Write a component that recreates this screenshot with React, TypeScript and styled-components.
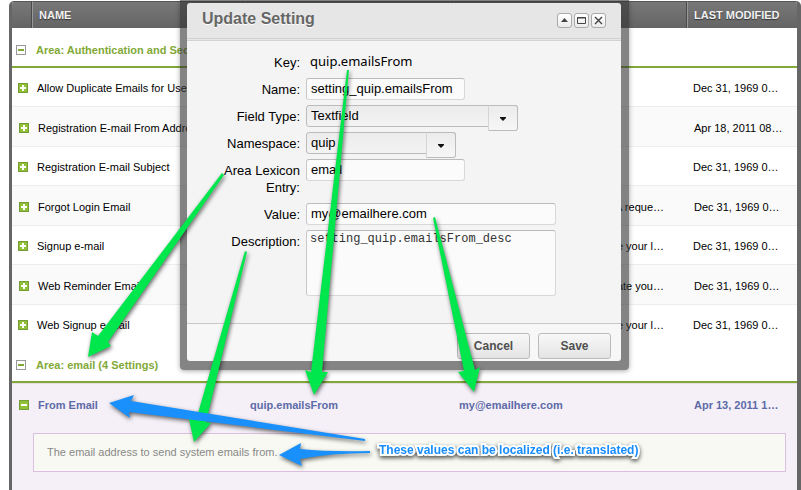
import React from "react";
import styled, { createGlobalStyle, css } from "styled-components";

const GlobalStyle = createGlobalStyle`
  * { box-sizing: border-box; }
  body {
    margin: 0;
    background: #fff;
    color: #000;
    font-family: "Liberation Sans", Arial, sans-serif;
    font-size: 11px;
  }
`;

const Page = styled.main`
  position: relative;
  height: 100vh;
  overflow: hidden;
  padding: 1px 0 0 9px;
`;

const GridPanel = styled.section`
  min-height: 100%;
  border: solid #666;
  border-width: 0 4px 0 3px;
  border-radius: 5px 5px 0 0;
  background: #f5f0f7;
  overflow: hidden;
`;

const GridTable = styled.table`
  width: 100%;
  table-layout: fixed;
  border-collapse: separate;
  border-spacing: 0;
`;

const Head = styled.th`
  height: 27px;
  padding: 0 6px;
  border-top: 1px solid #555;
  border-left: 1px solid #989898;
  border-right: 1px solid #4a4a4a;
  background: linear-gradient(#787878, #646464);
  color: #f2f2f2;
  font-size: 11px;
  text-align: left;
  text-shadow: 0 1px 1px #333;
  &:first-child { border-left: 0; }
  &:last-child { border-right: 0; }
`;

const GroupCell = styled.td`
  height: 40px;
  padding: 6px 4px 0;
  background: #fff;
  border-bottom: 2px solid #82a937;
  color: #82a937;
  font-weight: bold;
`;

const GroupTitle = styled.div`
  display: flex;
  align-items: center;
  gap: 10px;
`;

const Row = styled.tr<{ $alt?: boolean }>`
  td {
    height: 38px;
    padding: 2px 0 0 5px;
    background: #fff;
    white-space: nowrap;
  }
  ${(p) => p.$alt && css`
    td {
      height: 41px;
      padding: 2px 0 0 6px;
      background: #fafafa;
      border: solid #ededed;
      border-width: 1px 0;
    }
  `}
  td:first-child { padding-left: ${(p) => (p.$alt ? 7 : 6)}px; }
  td:last-child { padding-left: ${(p) => (p.$alt ? 7 : 6)}px; }
  td:nth-child(4) { text-align: right; padding-right: 23px; }
`;

const SelectedRow = styled.tr`
  td {
    height: 45px;
    padding: 0 6px 2px;
    border-top: 1px solid #e4dde8;
    color: #5d6ba8;
    font-weight: bold;
    white-space: nowrap;
  }
  td:first-child { padding-left: 7px; }
  td:last-child { padding-left: 7px; }
`;

const DetailCell = styled.td`
  padding: 5px 11px 20px 21px;
`;

const Detail = styled.p`
  margin: 0;
  padding: 12px 13px;
  line-height: 13px;
  background: #f8f9f2;
  border: 1px solid #dcbfe0;
  color: #888;
`;

const Toggle = styled.button`
  display: block;
  width: 10px;
  height: 10px;
  padding: 0;
  border: 0;
  background: none;
  svg { display: block; }
`;

const Dialog = styled.section`
  position: absolute;
  top: 0;
  left: 180px;
  width: 449px;
  padding: 3px 8px 9px 7px;
  border-radius: 0 0 4px 4px;
  background: rgba(50, 50, 50, 0.6);
  box-shadow: 0 1px 5px rgba(0, 0, 0, 0.35);
`;

const TitleBar = styled.header`
  display: flex;
  align-items: center;
  justify-content: space-between;
  height: 38px;
  padding: 0 15px 4px;
  border-radius: 3px 3px 0 0;
  border-bottom: 3px double #d2d2d2;
  background: #e6e6e6;
`;

const Title = styled.h2`
  margin: 0;
  color: #666;
  font-size: 16px;
  line-height: 20px;
  text-shadow: 0 1px 0 #fff;
`;

const Tools = styled.div`
  display: flex;
  gap: 2px;
  padding-top: 3px;
`;

const Tool = styled.button`
  width: 15px;
  height: 15px;
  padding: 0;
  border: 1px solid #aaa;
  border-radius: 3px;
  background: linear-gradient(#fff, #ececec);
  svg { display: block; }
`;

const Form = styled.form`
  margin: 0;
`;

const Fields = styled.div`
  display: grid;
  grid-template-columns: 113px 1fr;
  column-gap: 6px;
  row-gap: 5px;
  padding: 10px 0 27px;
  background: #f4f4f4;
`;

const Label = styled.label`
  padding: 3px 0 2px 30px;
  font-size: 13px;
  line-height: 17px;
  text-align: right;
`;

const KeyValue = styled.output`
  padding: 1px 4px;
  height: 22px;
  font: 13px/18px "Noto Sans", "Open Sans", sans-serif;
`;

const field = css`
  display: block;
  border: 1px solid #d8d8d8;
  border-top-color: #bbb;
  border-left-color: #c8c8c8;
  border-radius: 3px;
  background: #fbfbfb;
  color: #000;
`;

const TextInput = styled.input<{ $wide?: boolean }>`
  ${field}
  width: ${(p) => (p.$wide ? 250 : 159)}px;
  height: 22px;
  padding: 0 4px 1px;
  font: 13px "Liberation Sans", Arial, sans-serif;
`;

const TextArea = styled.textarea`
  ${field}
  width: 250px;
  height: 66px;
  padding: 1px 3px;
  resize: none;
  color: #333;
  font: 12px/15px "Liberation Mono", "Courier New", monospace;
`;

const Combo = styled.div<{ $wide?: boolean }>`
  position: relative;
  width: ${(p) => (p.$wide ? 212 : 150)}px;
  height: 22px;
`;

const Select = styled.select`
  ${field}
  appearance: none;
  width: 100%;
  height: 22px;
  padding: 0 4px 1px;
  border-color: #bbb;
  background: linear-gradient(#ececec, #f3f3f3);
  font: 13px "Liberation Sans", Arial, sans-serif;
`;

const Trigger = styled.span`
  position: absolute;
  top: 0;
  right: 0;
  display: flex;
  align-items: center;
  justify-content: center;
  width: 30px;
  height: 26px;
  padding-top: 2px;
  border: 1px solid #bbb;
  border-left-color: #d5d5d5;
  border-radius: 0 3px 3px 0;
  background: linear-gradient(#ececec, #f6f6f6);
  pointer-events: none;
`;

const Footer = styled.footer`
  display: flex;
  justify-content: flex-end;
  gap: 8px;
  padding: 9px 10px 2px;
  border-top: 1px solid #c8c8c8;
  border-radius: 0 0 3px 3px;
  background: #f7f7f7;
`;

const ActionButton = styled.button`
  width: 73px;
  height: 26px;
  border: 1px solid #bbb;
  border-radius: 3px;
  background: linear-gradient(#f8f8f8, #e4e4e4);
  color: #505050;
  font: bold 12px "Liberation Sans", Arial, sans-serif;
`;

const Arrows = styled.svg`
  position: absolute;
  top: 0;
  left: 0;
  pointer-events: none;
  filter: drop-shadow(1px 2px 2px rgba(0, 0, 0, 0.6));
`;

const Note = styled.p`
  position: absolute;
  top: 442px;
  left: 379px;
  margin: 0;
  color: #168cff;
  font-size: 12px;
  line-height: 16px;
  font-weight: bold;
  white-space: nowrap;
  -webkit-text-stroke: 4px #fff;
  paint-order: stroke fill;
  filter: drop-shadow(0 2px 2px rgba(0, 0, 0, 0.7));
`;

function RowToggle({ open = false }: { open?: boolean }) {
  return (
    <Toggle type="button" aria-label={open ? "Collapse row" : "Expand row"}>
      <svg width="10" height="10" viewBox="0 0 10 10">
        <rect width="10" height="10" fill="#769d35" />
        <rect x="1" y="1" width="8" height="8" fill="#8fc036" />
        <path d={open ? "M2 4h6v2H2z" : "M2 4h2V2h2v2h2v2H6v2H4V6H2z"} fill="#fff" />
      </svg>
    </Toggle>
  );
}

function GroupToggle() {
  return (
    <Toggle type="button" aria-label="Collapse group">
      <svg width="10" height="10" viewBox="0 0 10 10">
        <rect x="0.5" y="0.5" width="9" height="9" fill="#fff" stroke="#999" />
        <path d="M2 4h6v2H2z" fill="#82a937" />
      </svg>
    </Toggle>
  );
}

function Group({ title }: { title: string }) {
  return (
    <tr>
      <GroupCell colSpan={5}>
        <GroupTitle><GroupToggle />{title}</GroupTitle>
      </GroupCell>
    </tr>
  );
}

const settings = [
  { name: "Allow Duplicate Emails for User", value: "", modified: "Dec 31, 1969 0…" },
  { name: "Registration E-mail From Addre", value: "", modified: "Apr 18, 2011 08…" },
  { name: "Registration E-mail Subject", value: "", modified: "Dec 31, 1969 0…" },
  { name: "Forgot Login Email", value: "A reque…", modified: "Dec 31, 1969 0…" },
  { name: "Signup e-mail", value: "e your l…", modified: "Dec 31, 1969 0…" },
  { name: "Web Reminder Email", value: "ate you…", modified: "Dec 31, 1969 0…" },
  { name: "Web Signup e-mail", value: "e your l…", modified: "Dec 31, 1969 0…" },
];

function SettingsGrid() {
  return (
    <GridPanel>
      <GridTable>
        <colgroup>
          <col width="20" />
          <col width="212" />
          <col width="209" />
          <col />
          <col width="110" />
        </colgroup>
        <thead>
          <tr>
            <Head aria-label="Expand" />
            <Head>NAME</Head>
            <Head aria-label="Key" />
            <Head aria-label="Value" />
            <Head>LAST MODIFIED</Head>
          </tr>
        </thead>
        <tbody>
          <Group title="Area: Authentication and Sec" />
          {settings.map((s, i) => (
            <Row key={s.name} $alt={i % 2 === 1}>
              <td><RowToggle /></td>
              <td>{s.name}</td>
              <td />
              <td>{s.value}</td>
              <td>{s.modified}</td>
            </Row>
          ))}
          <Group title="Area: email (4 Settings)" />
          <SelectedRow>
            <td><RowToggle open /></td>
            <td>From Email</td>
            <td>quip.emailsFrom</td>
            <td>my@emailhere.com</td>
            <td>Apr 13, 2011 1…</td>
          </SelectedRow>
          <tr>
            <DetailCell colSpan={5}>
              <Detail>The email address to send system emails from.</Detail>
            </DetailCell>
          </tr>
        </tbody>
      </GridTable>
    </GridPanel>
  );
}

function ComboBox({ id, value, wide }: { id: string; value: string; wide?: boolean }) {
  return (
    <Combo $wide={wide}>
      <Select id={id} defaultValue={value}>
        <option>{value}</option>
      </Select>
      <Trigger>
        <svg width="6" height="4" viewBox="0 0 6 4"><path d="M0 0h6v1L3 4 0 1z" fill="#111" /></svg>
      </Trigger>
    </Combo>
  );
}

function UpdateDialog() {
  return (
    <Dialog role="dialog" aria-labelledby="dialog-title">
      <TitleBar>
        <Title id="dialog-title">Update Setting</Title>
        <Tools>
          <Tool type="button" aria-label="Roll up">
            <svg width="13" height="13" viewBox="0 0 13 13"><path d="M3 8l3.5-4L10 8z" fill="#444" /></svg>
          </Tool>
          <Tool type="button" aria-label="Maximize">
            <svg width="13" height="13" viewBox="0 0 13 13">
              <path d="M2.500 3.500h8v6h-8zM2 4h9" fill="none" stroke="#444" />
            </svg>
          </Tool>
          <Tool type="button" aria-label="Close">
            <svg width="13" height="13" viewBox="0 0 13 13">
              <path d="M3 3l7 7M10 3l-7 7" fill="none" stroke="#444" strokeWidth="1.4" />
            </svg>
          </Tool>
        </Tools>
      </TitleBar>
      <Form onSubmit={(e) => e.preventDefault()}>
        <Fields>
          <Label htmlFor="key">Key:</Label>
          <KeyValue id="key">quip.emailsFrom</KeyValue>
          <Label htmlFor="name">Name:</Label>
          <TextInput id="name" defaultValue="setting_quip.emailsFrom" />
          <Label htmlFor="type">Field Type:</Label>
          <ComboBox id="type" value="Textfield" wide />
          <Label htmlFor="namespace">Namespace:</Label>
          <ComboBox id="namespace" value="quip" />
          <Label htmlFor="area">Area Lexicon Entry:</Label>
          <TextInput id="area" defaultValue="email" />
          <Label htmlFor="value">Value:</Label>
          <TextInput id="value" $wide defaultValue="my@emailhere.com" />
          <Label htmlFor="description">Description:</Label>
          <TextArea id="description" spellCheck={false} defaultValue="setting_quip.emailsFrom_desc" />
        </Fields>
        <Footer>
          <ActionButton type="button">Cancel</ActionButton>
          <ActionButton type="submit">Save</ActionButton>
        </Footer>
      </Form>
    </Dialog>
  );
}

export default function App() {
  return (
    <Page>
      <GlobalStyle />
      <SettingsGrid />
      <UpdateDialog />
      <Arrows width="801" height="490" viewBox="0 0 801 490" aria-hidden="true">
        <g fill="#00e64d">
          <path d="M222 173L224 175L108 342L111 346L88 357L92 332L98 336Z" />
          <path d="M347 70L349 70L322 372L328 372L314 395L305 370L311 372Z" />
          <path d="M433 218L435 217L475 370L480 367L474 392L458 372L464 371Z" />
          <path d="M245 251L247 252L206 422L211 423L194 442L189 419L196 420Z" />
        </g>
        <g fill="#1a90fc">
          <path d="M365 439L365 441L129 412L130 418L109 403L134 395L131 401Z" />
          <path d="M370 451L370 453Q330 453 300 459L302 466L279 455L301 443L300 449Q330 452 370 451Z" />
        </g>
      </Arrows>
      <Note>These values can be localized (i.e. translated)</Note>
    </Page>
  );
}
